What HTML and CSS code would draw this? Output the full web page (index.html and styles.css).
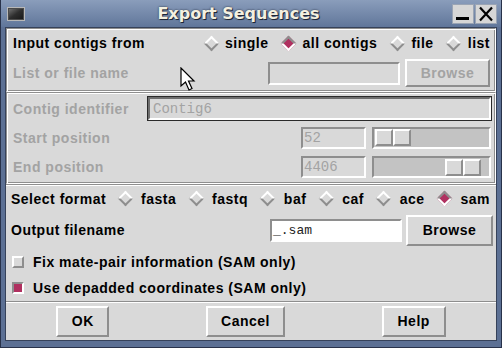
FILE: index.html
```html
<!DOCTYPE html>
<html lang="en">
<head>
    <meta charset="UTF-8">
    <title>Export Sequences</title>
    <link rel="stylesheet" href="styles.css">
</head>
<body>
    <div class="window">
        <div class="titlebar">
            <svg class="app-icon" width="18" height="14" viewBox="0 0 18 14">
                <defs>
                    <linearGradient id="scr" x1="0" y1="0" x2="1" y2="1">
                        <stop offset="0" stop-color="#707070"/>
                        <stop offset="0.5" stop-color="#2e2e2e"/>
                        <stop offset="1" stop-color="#1a1a1a"/>
                    </linearGradient>
                </defs>
                <rect x="0.5" y="0.5" width="17" height="13" fill="#4a4a4a" stroke="#b8b8b8"/>
                <rect x="2" y="2" width="14" height="10" fill="url(#scr)"/>
            </svg>
            <div class="title">Export Sequences</div>
            <div class="title-buttons">
                <span class="tbtn">
                    <svg width="18" height="16" viewBox="0 0 18 16"><rect x="2" y="11" width="13" height="3" fill="#000"/></svg>
                </span>
                <span class="tbtn">
                    <svg width="18" height="16" viewBox="0 0 18 16"><path d="M3 1.5 L15 14.5 M15 1.5 L3 14.5" stroke="#000" stroke-width="2.2" fill="none"/></svg>
                </span>
            </div>
        </div>

        <div class="client">
            <!-- source of the contigs -->
            <div class="frame source">
                <div class="row r-source">
                    <span class="label wide">Input contigs from</span>
                    <div class="radios">
                        <span class="radio"><i class="dia"></i>single</span>
                        <span class="radio"><i class="dia on"></i>all contigs</span>
                        <span class="radio"><i class="dia"></i>file</span>
                        <span class="radio"><i class="dia"></i>list</span>
                    </div>
                </div>
                <div class="row r-list">
                    <span class="label off">List or file name</span>
                    <span class="entry off list-entry"></span>
                    <span class="button off browse-off">Browse</span>
                </div>
            </div>

            <!-- single contig range -->
            <div class="frame contig">
                <div class="row r-ident">
                    <span class="label off ident">Contig identifier</span>
                    <span class="entry off focus ident-entry">Contig6</span>
                </div>
                <div class="row r-range">
                    <span class="label off">Start position</span>
                    <span class="entry off pos-entry">52</span>
                    <span class="scale"><span class="slider"><span></span><span></span></span></span>
                </div>
                <div class="row r-range">
                    <span class="label off">End position</span>
                    <span class="entry off pos-entry">4406</span>
                    <span class="scale end"><span class="slider"><span></span><span></span></span></span>
                </div>
            </div>

            <!-- output options -->
            <div class="frame output">
                <div class="row r-format">
                    <span class="label fmt">Select format</span>
                    <div class="radios">
                        <span class="radio"><i class="dia"></i>fasta</span>
                        <span class="radio"><i class="dia"></i>fastq</span>
                        <span class="radio"><i class="dia"></i>baf</span>
                        <span class="radio"><i class="dia"></i>caf</span>
                        <span class="radio"><i class="dia"></i>ace</span>
                        <span class="radio"><i class="dia on"></i>sam</span>
                    </div>
                </div>
                <div class="row r-file">
                    <span class="label">Output filename</span>
                    <span class="entry file-entry">_.sam</span>
                    <span class="button browse">Browse</span>
                </div>
                <div class="row r-check">
                    <i class="check"></i>Fix mate-pair information (SAM only)
                </div>
                <div class="row r-check">
                    <i class="check on"></i>Use depadded coordinates (SAM only)
                </div>
            </div>

            <div class="buttonbar">
                <div class="cell"><span class="button ok">OK</span></div>
                <div class="cell"><span class="button cancel">Cancel</span></div>
                <div class="cell"><span class="button help">Help</span></div>
            </div>
        </div>

        <svg class="cursor" width="16" height="25" viewBox="0 0 16 25">
            <path d="M1 1 L1 19 L5.5 15 L9 23 L12 21.5 L8.5 14 L14 14 Z" fill="#fff" stroke="#000" stroke-width="1.2" stroke-linejoin="miter"/>
        </svg>
    </div>
</body>
</html>
```

FILE: styles.css
```css
/* Page and window frame */
body {
    margin: 0;
    font-family: "Liberation Sans", Arial, sans-serif;
    font-size: 14px;
    font-weight: bold;
    letter-spacing: 0.5px;
    color: #000;
    background: #d9d9d9;
}
.window {
    position: relative;
    width: 502px;
    height: 348px;
    box-sizing: border-box;
    display: flex;
    flex-direction: column;
    padding: 0 4px 6px 4px;
    border: 1px solid #28324a;
    border-top: none;
    background: #5c7094;
}

/* Title bar */
.titlebar {
    height: 27px;
    margin: 0 -4px;
    padding: 0 4px 0 6px;
    display: flex;
    align-items: center;
    background: linear-gradient(#8a9dbb, #60769a);
}
.app-icon {
    flex: none;
}
.title {
    flex: 1;
    text-align: center;
    font-family: "DejaVu Sans", sans-serif;
    font-size: 16px;
    letter-spacing: 0;
    color: #f4f0e0;
    text-shadow: 1px 1px 0 #1e2636, 0 0 2px #1e2636;
}
.title-buttons {
    display: flex;
    gap: 1px;
}
.tbtn {
    width: 22px;
    height: 20px;
    box-sizing: border-box;
    display: flex;
    align-items: center;
    justify-content: center;
    background: #d6d6d6;
    border: 1px solid #9aa4b4;
}

/* Dialog body */
.client {
    flex: 1;
    display: flex;
    flex-direction: column;
    background: #d9d9d9;
    border: 1px solid #36425a;
}
.frame {
    box-sizing: border-box;
    border: 1px solid;
    border-color: #8e8e8e #fff #fff #8e8e8e;
    box-shadow: inset 1px 1px 0 #fff, inset -1px -1px 0 #8e8e8e;
    padding: 1px 5px 1px 6px;
}
.source {
    height: 64px;
}
.contig {
    height: 92px;
    padding-right: 4px;
}
.output {
    height: 117px;
    border: none;
    border-top: 1px solid #8e8e8e;
    box-shadow: inset 0 1px 0 #fff;
    padding: 1px 3px 0 5px;
}
.row {
    display: flex;
    align-items: center;
}
.label {
    white-space: nowrap;
}
.off {
    color: #a3a3a3;
}

/* Radio buttons (Tk diamonds) */
.radios {
    flex: 1;
    display: flex;
    justify-content: space-between;
}
.radio {
    display: flex;
    align-items: center;
    gap: 6px;
}
.dia {
    width: 16px;
    height: 16px;
    display: flex;
    align-items: center;
    justify-content: center;
}
.dia::before {
    content: "";
    width: 7px;
    height: 7px;
    border: 2px solid;
    border-color: #fff #8e8e8e #8e8e8e #fff;
    transform: rotate(45deg);
}
.dia.on::before {
    background: #b03060;
    border-color: #8e8e8e #fff #fff #8e8e8e;
}

/* Entries, buttons and scales */
.entry {
    box-sizing: border-box;
    display: flex;
    align-items: center;
    padding-left: 1px;
    border: 2px solid;
    border-color: #8e8e8e #fff #fff #8e8e8e;
    font-family: "Liberation Mono", "Courier New", monospace;
    font-weight: normal;
    font-size: 14px;
    letter-spacing: 0;
}
.button {
    box-sizing: border-box;
    height: 31px;
    display: flex;
    align-items: center;
    justify-content: center;
    border: 2px solid;
    border-color: #fff #8e8e8e #8e8e8e #fff;
}
.scale {
    box-sizing: border-box;
    width: 119px;
    height: 22px;
    margin-left: 6px;
    padding: 0 1px;
    display: flex;
    align-items: center;
    border: 2px solid;
    border-color: #8e8e8e #fff #fff #8e8e8e;
    background: #c3c3c3;
}
.scale.end {
    justify-content: flex-end;
    padding-right: 8px;
}
.slider {
    display: flex;
}
.slider span {
    box-sizing: border-box;
    width: 18px;
    height: 17px;
    border: 2px solid;
    border-color: #fff #8e8e8e #8e8e8e #fff;
    background: #d9d9d9;
}

/* Input contigs frame */
.r-source {
    height: 26px;
}
.label.wide {
    width: 190px;
}
.r-list {
    height: 34px;
}
.list-entry {
    width: 132px;
    height: 23px;
    margin-left: auto;
}
.browse-off {
    width: 85px;
    height: 28px;
    margin-left: 5px;
}

/* Contig range frame */
.r-ident {
    height: 29px;
}
.label.ident {
    width: 135px;
}
.ident-entry {
    width: 343px;
    height: 23px;
    padding-left: 3px;
    border-color: #6e6e6e #fff #fff #6e6e6e;
    box-shadow: 0 0 0 1px #2a2a2a;
}
.r-range {
    height: 29px;
}
.r-range:last-child {
    height: 30px;
}
.pos-entry {
    width: 65px;
    height: 22px;
    margin-left: auto;
}

/* Output frame */
.r-format {
    height: 25px;
}
.label.fmt {
    width: 106px;
}
.r-format .radio {
    gap: 8px;
}
.r-format .radios {
    padding-right: 3px;
}
.r-file {
    height: 38px;
}
.file-entry {
    width: 132px;
    height: 23px;
    margin-left: auto;
    padding-left: 1px;
    background: #fff;
    font-size: 13px;
    color: #222;
}
.browse {
    width: 87px;
    margin-left: 4px;
}
.r-check {
    height: 26px;
}
.check {
    width: 12px;
    height: 12px;
    margin: 0 9px 0 1px;
    box-sizing: border-box;
    border: 2px solid;
    border-color: #fff #8e8e8e #8e8e8e #fff;
}
.check.on {
    background: #b03060;
    border-color: #8e8e8e #fff #fff #8e8e8e;
}

/* Bottom buttons */
.buttonbar {
    flex: 1;
    display: flex;
    align-items: center;
    padding: 0 2px;
    border-top: 1px solid #8e8e8e;
    box-shadow: inset 0 1px 0 #fff;
}
.cell {
    flex: 1 1 auto;
    display: flex;
    justify-content: center;
}
.ok {
    width: 53px;
}
.cancel {
    width: 79px;
}
.help {
    width: 64px;
}

/* Mouse pointer over the dialog */
.cursor {
    position: absolute;
    left: 179px;
    top: 67px;
}
```
